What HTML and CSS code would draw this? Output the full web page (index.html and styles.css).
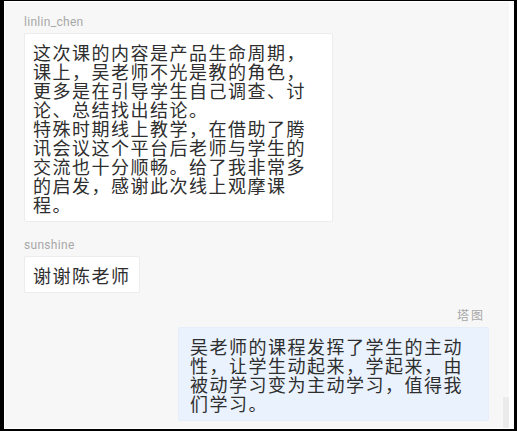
FILE: index.html
```html
<!DOCTYPE html>
<html lang="zh-CN">
<head>
  <meta charset="UTF-8">
  <title>课程评论</title>
  <meta name="viewport" content="width=device-width, initial-scale=1.0">
  <link rel="stylesheet" href="styles.css">
</head>
<body>
  <div class="frame">
    <div class="chat">
      <div class="msg">
        <div class="name">linlin_chen</div>
        <div class="bubble">这次课的内容是产品生命周期，课上，吴老师不光是教的角色，更多是在引导学生自己调查、讨论、总结找出结论。<br>特殊时期线上教学，在借助了腾讯会议这个平台后老师与学生的交流也十分顺畅。给了我非常多的启发，感谢此次线上观摩课程。</div>
      </div>

      <div class="msg">
        <div class="name">sunshine</div>
        <div class="bubble">谢谢陈老师</div>
      </div>

      <div class="msg mine">
        <div class="name">塔图</div>
        <div class="bubble">吴老师的课程发挥了学生的主动性，让学生动起来，学起来，由被动学习变为主动学习，值得我们学习。</div>
      </div>

      <div class="scroll-thumb"></div>
    </div>
  </div>
</body>
</html>
```

FILE: styles.css
```css
body {
  margin: 0;
  background: #fff;
  font-family: "Noto Sans CJK SC", "Noto Sans", sans-serif;
}
.frame {
  width: 517px;
  height: 431px;
  box-sizing: border-box;
  border-style: solid;
  border-color: #000;
  border-width: 1px 3px 2px 4px;
  padding: 1px 5px 1px 1px;
  background: #fff;
}
.chat {
  position: relative;
  height: 100%;
  box-sizing: border-box;
  background: #f7f7f7;
  padding: 13px 20px 0 19px;
  display: flex;
  flex-direction: column;
  gap: 16px;
}
.msg {
  display: flex;
  flex-direction: column;
  align-items: flex-start;
}
.msg.mine {
  align-items: flex-end;
}
.name {
  font-family: Roboto, "Noto Sans CJK SC", sans-serif;
  font-size: 12px;
  line-height: 14px;
  color: #a8a8a8;
  letter-spacing: 0.3px;
  margin-bottom: 4px;
}
.mine .name {
  margin-right: 4px;
  letter-spacing: 2px;
}
.bubble {
  box-sizing: border-box;
  max-width: 309px;
  padding: 9px 8px 7px 8px;
  background: #fff;
  border: 1px solid #ececec;
  border-radius: 2px;
  color: #2e2e2e;
  font-size: 18px;
  line-height: 19px;
  letter-spacing: 1.5px;
}
.mine .bubble {
  max-width: 311px;
  padding-left: 11px;
  background: #eaf2fd;
  border-color: #e6eefa;
}
.scroll-thumb {
  position: absolute;
  right: 0;
  bottom: 0;
  width: 6px;
  height: 31px;
  background: #ebebeb;
}
```
